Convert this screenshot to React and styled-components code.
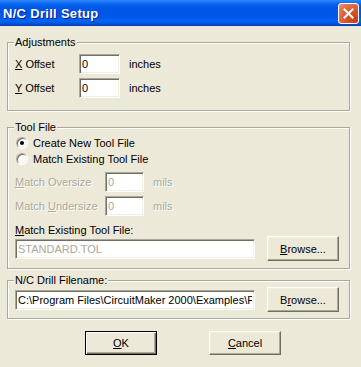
import React from 'react';
import styled, { createGlobalStyle, css } from 'styled-components';

const GlobalStyle = createGlobalStyle`
  body {
    margin: 0;
    font-family: 'Liberation Sans', Arial, sans-serif;
    font-size: 11px;
    color: #000;
  }
`;

const StyledWindow = styled.div`
  width: 361px;
  height: 367px;
  background: #ece9d8;
  display: flex;
  flex-direction: column;
  overflow: hidden;
`;

const StyledTitleBar = styled.div`
  height: 26px;
  flex: none;
  display: flex;
  align-items: center;
  justify-content: space-between;
  padding: 0 2px 0 3px;
  background: linear-gradient(
    180deg,
    #2f86fb 0%,
    #1a77f8 8%,
    #0865ee 16%,
    #0058e6 28%,
    #0055e5 56%,
    #005cf0 70%,
    #0264f6 80%,
    #005ae8 88%,
    #004dc8 94%,
    #003ea8 100%
  );
`;

const StyledTitle = styled.span`
  color: #fff;
  font-family: 'Liberation Sans', Arial, sans-serif;
  font-weight: bold;
  font-size: 13px;
  letter-spacing: 0.3px;
  text-shadow: 1px 1px 0 #0a1a8a;
`;

const StyledClose = styled.div`
  width: 21px;
  height: 21px;
  box-sizing: border-box;
  border: 1px solid #fff;
  border-radius: 3px;
  background: radial-gradient(circle at 85% 85%, #c7400f 0%, #d9562c 45%, #e67a56 80%, #f0a080 100%);
  display: flex;
  align-items: center;
  justify-content: center;
`;

const StyledClient = styled.div`
  flex: 1;
  display: flex;
  flex-direction: column;
  padding: 10px 11px 0 7px;
`;

const StyledGroup = styled.fieldset`
  margin: ${({ $gap }) => $gap || 0}px 0 0 0;
  padding: ${({ $pad }) => $pad};
  min-width: 0;
  border: 1px solid #aca899;
  box-shadow: 1px 1px 0 #fff, inset 1px 1px 0 #fff;
`;

const StyledLegend = styled.legend`
  padding: 0 1px;
  margin-left: -1px;
  line-height: 13px;
  background: #ece9d8;
`;

const StyledRow = styled.div`
  display: flex;
  align-items: center;
  height: ${({ $h }) => $h || 20}px;
  margin-top: ${({ $mt }) => $mt || 0}px;
`;

const disabledText = css`
  color: #aca899;
  text-shadow: 1px 1px 0 #fff;
`;

const StyledLabel = styled.span`
  width: ${({ $w }) => $w}px;
  flex: none;
  ${({ $disabled }) => $disabled && disabledText}
`;

const StyledUnit = styled.span`
  margin-left: 9px;
  ${({ $disabled }) => $disabled && disabledText}
`;

const StyledCaption = styled.div`
  margin-top: 8px;
  line-height: 12px;
`;

const StyledField = styled.input`
  box-sizing: border-box;
  width: ${({ $w }) => $w}px;
  height: 20px;
  margin: 0;
  padding: 0 2px;
  font-family: 'Liberation Sans', Arial, sans-serif;
  font-size: 11px;
  color: #000;
  background: #fff;
  border: 1px solid;
  border-color: #aca899 #fff #fff #aca899;
  box-shadow: inset 1px 1px 0 #716f64, inset -1px -1px 0 #f1efe2;
  outline: none;

  &:disabled {
    color: #aca899;
    background: #fff;
  }
`;

const StyledButton = styled.button`
  box-sizing: border-box;
  width: 72px;
  height: ${({ $h }) => $h || 25}px;
  margin: 0 0 0 ${({ $ml }) => $ml || 0}px;
  padding: 0;
  background: #ece9d8;
  font-family: 'Liberation Sans', Arial, sans-serif;
  font-size: 11px;
  color: #000;
  border: 1px solid;
  border-color: #fff #716f64 #716f64 #fff;
  box-shadow: inset -1px -1px 0 #aca899, inset 1px 1px 0 #f1efe2;

  ${({ $default }) =>
    $default &&
    css`
      border-color: #000;
      box-shadow: inset 1px 1px 0 #fff, inset -1px -1px 0 #716f64, inset -2px -2px 0 #aca899;
    `}
`;

const StyledRadioRow = styled.label`
  display: flex;
  align-items: center;
  height: 16px;
  margin-left: 1px;
`;

const StyledRadio = styled.span`
  box-sizing: border-box;
  width: 12px;
  height: 12px;
  margin-right: 5px;
  border-radius: 50%;
  background: #fff;
  border: 1px solid;
  border-color: #aca899 #fff #fff #aca899;
  box-shadow: inset 1px 1px 0 #716f64, inset -1px -1px 0 #f1efe2;
  display: flex;
  align-items: center;
  justify-content: center;

  &::after {
    content: '';
    width: 4px;
    height: 4px;
    border-radius: 50%;
    background: ${({ $checked }) => ($checked ? '#000' : 'transparent')};
  }
`;

const StyledButtons = styled.div`
  display: flex;
  gap: 52px;
  margin-top: 12px;
  padding-left: 78px;
`;

const StyledKey = styled.u`
  text-decoration: underline;
  text-underline-offset: 1px;
`;

const CloseIcon = () => (
  <svg width="11" height="11" viewBox="0 0 11 11">
    <path d="M1.5 1.5 L9.5 9.5 M9.5 1.5 L1.5 9.5" stroke="#fff" strokeWidth="2" strokeLinecap="square" />
  </svg>
);

const DrillSetup = () => (
  <StyledWindow>
    <StyledTitleBar>
      <StyledTitle>N/C Drill Setup</StyledTitle>
      <StyledClose>
        <CloseIcon />
      </StyledClose>
    </StyledTitleBar>
    <StyledClient>
      <StyledGroup $pad="5px 8px 12px 7px">
        <StyledLegend>Adjustments</StyledLegend>
        <StyledRow>
          <StyledLabel $w={64}>
            <StyledKey>X</StyledKey> Offset
          </StyledLabel>
          <StyledField $w={41} defaultValue="0" readOnly />
          <StyledUnit>inches</StyledUnit>
        </StyledRow>
        <StyledRow $mt={4}>
          <StyledLabel $w={64}>
            <StyledKey>Y</StyledKey> Offset
          </StyledLabel>
          <StyledField $w={41} defaultValue="0" readOnly />
          <StyledUnit>inches</StyledUnit>
        </StyledRow>
      </StyledGroup>

      <StyledGroup $gap={10} $pad="1px 8px 7px 7px">
        <StyledLegend>Tool File</StyledLegend>
        <StyledRadioRow>
          <StyledRadio $checked />
          Create New Tool File
        </StyledRadioRow>
        <StyledRadioRow>
          <StyledRadio />
          Match Existing Tool File
        </StyledRadioRow>
        <StyledRow $mt={5}>
          <StyledLabel $w={90} $disabled>
            <StyledKey>M</StyledKey>atch Oversize
          </StyledLabel>
          <StyledField $w={39} defaultValue="0" disabled />
          <StyledUnit $disabled>mils</StyledUnit>
        </StyledRow>
        <StyledRow $mt={4}>
          <StyledLabel $w={90} $disabled>
            Match <StyledKey>U</StyledKey>ndersize
          </StyledLabel>
          <StyledField $w={39} defaultValue="0" disabled />
          <StyledUnit $disabled>mils</StyledUnit>
        </StyledRow>
        <StyledCaption>
          <StyledKey>M</StyledKey>atch Existing Tool File:
        </StyledCaption>
        <StyledRow $h={25}>
          <StyledField $w={240} defaultValue="STANDARD.TOL" disabled />
          <StyledButton $ml={12}>
            <StyledKey>B</StyledKey>rowse...
          </StyledButton>
        </StyledRow>
      </StyledGroup>

      <StyledGroup $gap={5} $pad="0 8px 6px 7px">
        <StyledLegend>N/C Drill Filename:</StyledLegend>
        <StyledRow $h={25}>
          <StyledField $w={240} defaultValue="C:\Program Files\CircuitMaker 2000\Examples\PCB Drill.txt" readOnly />
          <StyledButton $ml={12}>
            B<StyledKey>r</StyledKey>owse...
          </StyledButton>
        </StyledRow>
      </StyledGroup>

      <StyledButtons>
        <StyledButton $h={24} $default>
          <StyledKey>O</StyledKey>K
        </StyledButton>
        <StyledButton $h={24}>
          <StyledKey>C</StyledKey>ancel
        </StyledButton>
      </StyledButtons>
    </StyledClient>
  </StyledWindow>
);

const App = () => (
  <>
    <GlobalStyle />
    <DrillSetup />
  </>
);

export default App;
